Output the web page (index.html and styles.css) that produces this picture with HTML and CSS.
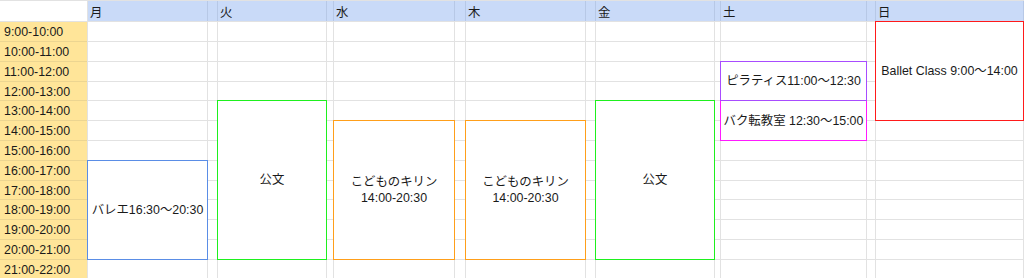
FILE: index.html
```html
<!DOCTYPE html>
<html lang="ja">
<head>
<meta charset="utf-8">
<title>時間割</title>
<link rel="stylesheet" href="styles.css">
</head>
<body>
<div class="sheet">
  <div class="h0"></div><div class="h">月</div><div class="h"></div><div class="h">火</div><div class="h"></div><div class="h">水</div><div class="h"></div><div class="h">木</div><div class="h"></div><div class="h">金</div><div class="h"></div><div class="h">土</div><div class="h"></div><div class="h">日</div>

  <div class="t">9:00-10:00</div><div class="c"></div><div class="c"></div><div class="c"></div><div class="c"></div><div class="c"></div><div class="c"></div><div class="c"></div><div class="c"></div><div class="c"></div><div class="c"></div><div class="c"></div><div class="c"></div>
  <div class="t">10:00-11:00</div><div class="c"></div><div class="c"></div><div class="c"></div><div class="c"></div><div class="c"></div><div class="c"></div><div class="c"></div><div class="c"></div><div class="c"></div><div class="c"></div><div class="c"></div><div class="c"></div>
  <div class="t">11:00-12:00</div><div class="c"></div><div class="c"></div><div class="c"></div><div class="c"></div><div class="c"></div><div class="c"></div><div class="c"></div><div class="c"></div><div class="c"></div><div class="c"></div><div class="c"></div>
  <div class="t">12:00-13:00</div><div class="c"></div><div class="c"></div><div class="c"></div><div class="c"></div><div class="c"></div><div class="c"></div><div class="c"></div><div class="c"></div><div class="c"></div><div class="c"></div><div class="c"></div>
  <div class="t">13:00-14:00</div><div class="c"></div><div class="c"></div><div class="c"></div><div class="c"></div><div class="c"></div><div class="c"></div><div class="c"></div><div class="c"></div><div class="c"></div>
  <div class="t">14:00-15:00</div><div class="c"></div><div class="c"></div><div class="c"></div><div class="c"></div><div class="c"></div><div class="c"></div><div class="c"></div><div class="c"></div>
  <div class="t">15:00-16:00</div><div class="c"></div><div class="c"></div><div class="c"></div><div class="c"></div><div class="c"></div><div class="c"></div><div class="c"></div><div class="c"></div><div class="c"></div>
  <div class="t">16:00-17:00</div><div class="c"></div><div class="c"></div><div class="c"></div><div class="c"></div><div class="c"></div><div class="c"></div><div class="c"></div><div class="c"></div>
  <div class="t">17:00-18:00</div><div class="c"></div><div class="c"></div><div class="c"></div><div class="c"></div><div class="c"></div><div class="c"></div><div class="c"></div><div class="c"></div>
  <div class="t">18:00-19:00</div><div class="c"></div><div class="c"></div><div class="c"></div><div class="c"></div><div class="c"></div><div class="c"></div><div class="c"></div><div class="c"></div>
  <div class="t">19:00-20:00</div><div class="c"></div><div class="c"></div><div class="c"></div><div class="c"></div><div class="c"></div><div class="c"></div><div class="c"></div><div class="c"></div>
  <div class="t">20:00-21:00</div><div class="c"></div><div class="c"></div><div class="c"></div><div class="c"></div><div class="c"></div><div class="c"></div><div class="c"></div><div class="c"></div>
  <div class="t">21:00-22:00</div><div class="c"></div><div class="c"></div><div class="c"></div><div class="c"></div><div class="c"></div><div class="c"></div><div class="c"></div><div class="c"></div><div class="c"></div><div class="c"></div><div class="c"></div><div class="c"></div><div class="c"></div>

  <div class="ev ev-mon">バレエ16:30～20:30</div>
  <div class="ev ev-tue">公文</div>
  <div class="ev ev-wed">こどものキリン<br>14:00-20:30</div>
  <div class="ev ev-thu">こどものキリン<br>14:00-20:30</div>
  <div class="ev ev-fri">公文</div>
  <div class="ev ev-sat2">バク転教室 12:30～15:00</div>
  <div class="ev ev-sat1">ピラティス11:00～12:30</div>
  <div class="ev ev-sun">Ballet Class 9:00～14:00</div>
</div>
</body>
</html>
```

FILE: styles.css
```css
* {
  box-sizing: border-box;
}

html, body {
  margin: 0;
  padding: 0;
  background: #ffffff;
  overflow: hidden;
}

body {
  font-family: "Liberation Sans", Arial, "Noto Sans CJK JP", sans-serif;
  font-size: 12.4px;
  color: #1a1a1a;
}

.sheet {
  display: grid;
  grid-template-columns: 87px 119px 9px 108px 6px 120px 10px 119px 9px 118px 5px 145px 8px 147px;
  grid-template-rows: 20px 19px 19px 19px 18px 19px 19px 19px 19px 18px 19px 19px 19px 19px;
  gap: 1px;
  padding: 1px 1px 0 0;
  background: #e2e2e2;
  width: 1024px;
  height: 278px;
  overflow: hidden;
}

.c,
.h0 {
  background: #ffffff;
}

.h {
  background: #c9daf8;
  box-shadow: 1px 0 0 #b7c8e6;
  display: flex;
  align-items: center;
  padding: 2px 0 0 2px;
  font-family: "Noto Sans CJK JP", sans-serif;
  font-size: 12.4px;
  line-height: 14px;
}

.t {
  background: #ffe599;
  box-shadow: 0 1px 0 #ecd591;
  display: flex;
  align-items: center;
  padding: 1px 0 0 4px;
  white-space: nowrap;
  line-height: 14px;
}

.ev {
  margin: -1px;
  border: 1px solid #999999;
  background: #ffffff;
  display: flex;
  align-items: center;
  justify-content: center;
  text-align: center;
  line-height: 16px;
  white-space: nowrap;
  position: relative;
}

.ev-mon {
  grid-column: 2;
  grid-row: 9 / 14;
  border-color: #5a8de6;
}

.ev-tue {
  grid-column: 4;
  grid-row: 6 / 14;
  border-color: #1ef01e;
}

.ev-wed {
  grid-column: 6;
  grid-row: 7 / 14;
  border-color: #ff9f1a;
}

.ev-thu {
  grid-column: 8;
  grid-row: 7 / 14;
  border-color: #ff9f1a;
}

.ev-fri {
  grid-column: 10;
  grid-row: 6 / 14;
  border-color: #1ef01e;
}

.ev-sat1 {
  grid-column: 12;
  grid-row: 4 / 6;
  border-color: #a84cff;
}

.ev-sat2 {
  grid-column: 12;
  grid-row: 6 / 8;
  border-color: #ff1aff;
}

.ev-sun {
  grid-column: 14;
  grid-row: 2 / 7;
  border-color: #ff1a1a;
}
```
